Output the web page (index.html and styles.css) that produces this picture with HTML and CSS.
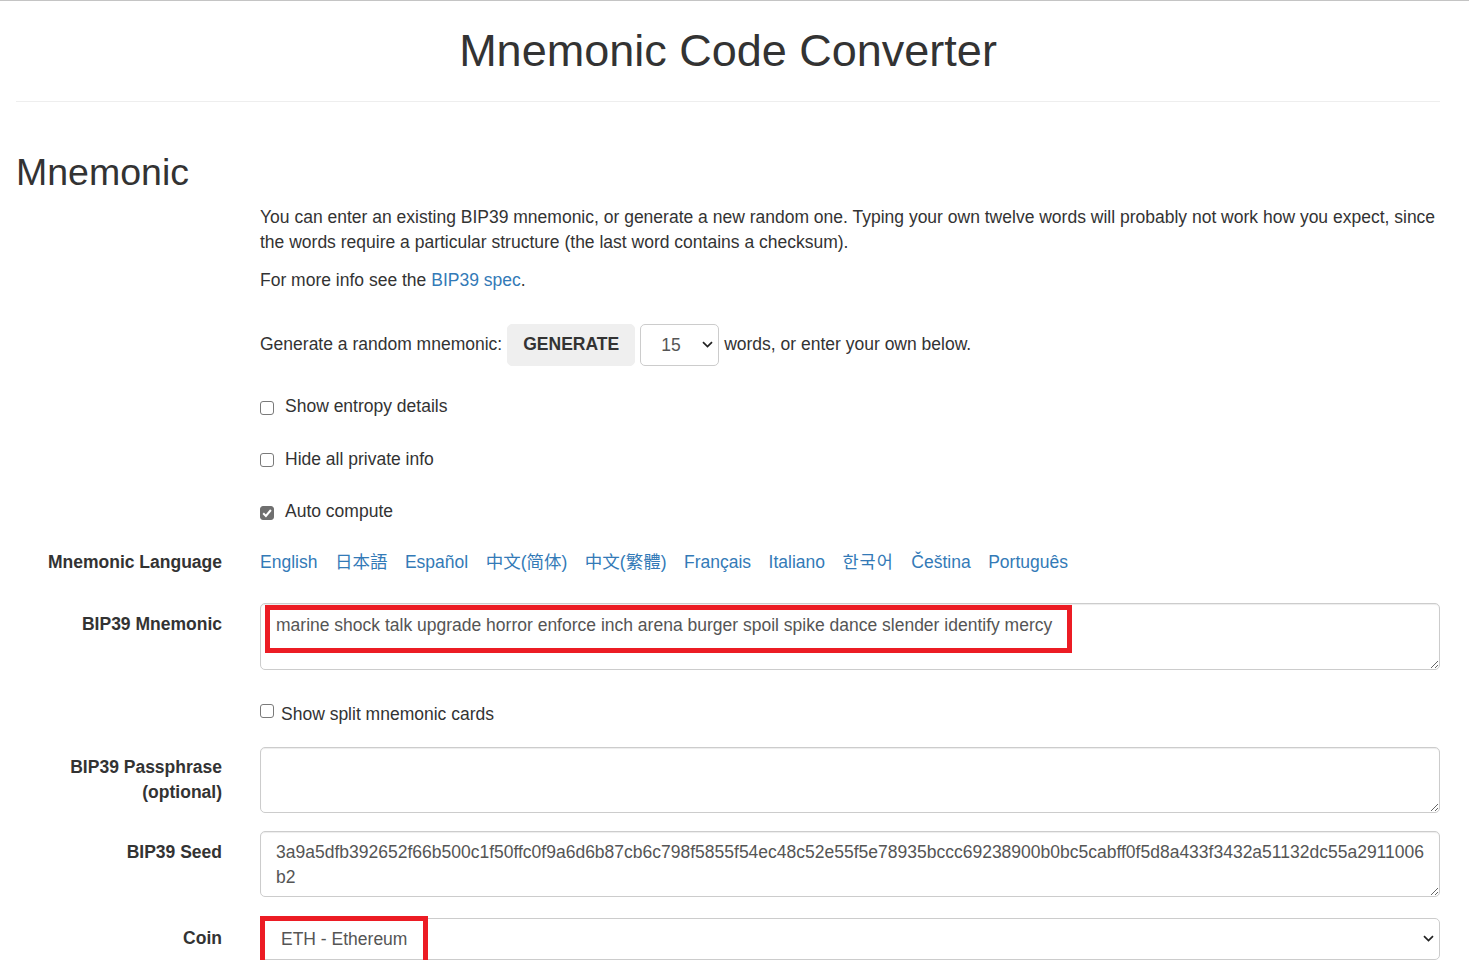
FILE: index.html
```html
<!DOCTYPE html>
<html lang="en">
<head>
<meta charset="utf-8">
<title>Mnemonic Code Converter</title>
<link rel="stylesheet" href="styles.css">
</head>
<body>
<div class="page">
  <header class="page-header">
    <h1>Mnemonic Code Converter</h1>
  </header>

  <h2 class="section-title">Mnemonic</h2>

  <form class="form">
    <div class="group intro">
      <div class="label-col"></div>
      <div class="field-col">
        <p>You can enter an existing BIP39 mnemonic, or generate a new random one. Typing your own twelve words will probably not work how you expect, since the words require a particular structure (the last word contains a checksum).</p>
        <p>For more info see the <a href="#bip39">BIP39 spec</a>.</p>
      </div>
    </div>

    <div class="group generate-row">
      <div class="label-col"></div>
      <div class="field-col inline">
        <span>Generate a random mnemonic:</span>
        <button type="button" class="btn">GENERATE</button>
        <span class="select-wrap words">
          <select class="select">
            <option>3</option><option>6</option><option>9</option><option>12</option>
            <option selected>15</option><option>18</option><option>21</option><option>24</option>
          </select>
          <svg class="chev" width="11" height="7" viewBox="0 0 11 7"><path d="M1 1.2 L5.5 5.6 L10 1.2" fill="none" stroke="#222" stroke-width="1.7"/></svg>
        </span>
        <span>words, or enter your own below.</span>
      </div>
    </div>

    <div class="group check-group">
      <div class="label-col blank"></div>
      <div class="field-col check">
        <label><input type="checkbox" class="sr"><span class="box"></span><span>Show entropy details</span></label>
      </div>
    </div>

    <div class="group check-group">
      <div class="label-col blank"></div>
      <div class="field-col check">
        <label><input type="checkbox" class="sr"><span class="box"></span><span>Hide all private info</span></label>
      </div>
    </div>

    <div class="group check-group">
      <div class="label-col blank"></div>
      <div class="field-col check">
        <label><input type="checkbox" class="sr" checked><span class="box checked"><svg width="14" height="14" viewBox="0 0 14 14"><path d="M3.2 7.3 L5.9 10 L10.9 4" fill="none" stroke="#fff" stroke-width="2"/></svg></span><span>Auto compute</span></label>
      </div>
    </div>

    <div class="group lang-group">
      <div class="label-col">Mnemonic Language</div>
      <div class="field-col langs">
        <a href="#english">English</a>
        <a href="#japanese">日本語</a>
        <a href="#spanish">Español</a>
        <a href="#chinese_simplified">中文(简体)</a>
        <a href="#chinese_traditional">中文(繁體)</a>
        <a href="#french">Français</a>
        <a href="#italian">Italiano</a>
        <a href="#korean" class="ko">한국어</a>
        <a href="#czech">Čeština</a>
        <a href="#portuguese">Português</a>
      </div>
    </div>

    <div class="group">
      <div class="label-col">BIP39 Mnemonic</div>
      <div class="field-col field">
        <textarea class="textarea mnemonic" rows="2">marine shock talk upgrade horror enforce inch arena burger spoil spike dance slender identify mercy</textarea>
        <div class="mark mark-mnemonic"></div>
      </div>
    </div>

    <div class="group split-row">
      <div class="label-col blank"></div>
      <div class="field-col split">
        <label><input type="checkbox" class="sr"><span class="box"></span><span>Show split mnemonic cards</span></label>
      </div>
    </div>

    <div class="group">
      <div class="label-col">BIP39 Passphrase (optional)</div>
      <div class="field-col field">
        <textarea class="textarea" rows="2"></textarea>
      </div>
    </div>

    <div class="group seed-row">
      <div class="label-col">BIP39 Seed</div>
      <div class="field-col field">
        <textarea class="textarea seed" rows="2" readonly>3a9a5dfb392652f66b500c1f50ffc0f9a6d6b87cb6c798f5855f54ec48c52e55f5e78935bccc69238900b0bc5cabff0f5d8a433f3432a51132dc55a2911006
b2</textarea>
      </div>
    </div>

    <div class="group coin-row">
      <div class="label-col">Coin</div>
      <div class="field-col field">
        <span class="select-wrap coin">
          <select class="select">
            <option>BTC - Bitcoin</option>
            <option selected>ETH - Ethereum</option>
          </select>
          <svg class="chev" width="11" height="7" viewBox="0 0 11 7"><path d="M1 1.2 L5.5 5.6 L10 1.2" fill="none" stroke="#222" stroke-width="1.7"/></svg>
        </span>
        <div class="mark mark-coin"></div>
      </div>
    </div>
  </form>
</div>
</body>
</html>
```

FILE: styles.css
```css
* {
  box-sizing: border-box;
}

html {
  background: #fff;
}

body {
  margin: 0;
  border-top: 1px solid #c4c4c4;
  font-family: "Liberation Sans", Arial, "Noto Sans CJK SC", sans-serif;
  font-size: 17.5px;
  line-height: 25px;
  color: #333;
  background: #fff;
}

.page {
  padding: 0 29px 0 16px;
}

.page-header {
  padding: 25px 0 25.5px;
  border-bottom: 1px solid #eee;
}

.page-header h1 {
  margin: 0;
  font-size: 45px;
  line-height: 49.5px;
  font-weight: normal;
  text-align: center;
  color: #333;
}

.section-title {
  margin: 50.4px 0 11.85px;
  font-size: 37.5px;
  line-height: 41.25px;
  font-weight: normal;
  color: #333;
}

.form {
  margin: 0;
}

.group {
  display: grid;
  grid-template-columns: 206px 1fr;
  column-gap: 38px;
  margin-bottom: 18.75px;
}

.label-col {
  text-align: right;
  font-weight: bold;
  padding-top: 8.75px;
}

.label-col.blank {
  padding: 0;
}

.field-col {
  min-width: 0;
}

.intro {
  margin-bottom: 18.5px;
}

.intro p {
  margin: 0 0 12.5px;
}

a {
  color: #337ab7;
  text-decoration: none;
}

.inline {
  display: flex;
  align-items: center;
  gap: 5px;
}

.btn {
  height: 42px;
  padding: 7.5px 15px;
  border: 1px solid #efefef;
  border-radius: 5px;
  background: #efefef;
  font-family: "Liberation Sans", Arial, sans-serif;
  font-size: 17.5px;
  line-height: 25px;
  font-weight: bold;
  color: #333;
}

.select-wrap {
  position: relative;
  display: inline-block;
}

.select-wrap.words {
  width: 79px;
}

.select-wrap.coin {
  display: block;
  width: 100%;
}

.select {
  appearance: none;
  -webkit-appearance: none;
  display: block;
  width: 100%;
  height: 42px;
  padding: 0 30px 0 20px;
  border: 1px solid #ccc;
  border-radius: 5px;
  background: #fff;
  font-family: "Liberation Sans", Arial, sans-serif;
  font-size: 17.5px;
  color: #555;
}

.chev {
  position: absolute;
  right: 6px;
  top: 50%;
  margin-top: -3.5px;
  pointer-events: none;
}

.sr {
  position: absolute;
  width: 1px;
  height: 1px;
  margin: 0;
  opacity: 0;
  pointer-events: none;
}

.check-group {
  margin-bottom: 17.75px;
}

.check {
  padding-top: 9.75px;
}

.check label,
.split label {
  position: relative;
  display: flex;
  align-items: flex-start;
}

.box {
  flex: none;
  display: block;
  width: 14px;
  height: 14px;
  border: 1px solid #7a7a7a;
  border-radius: 3px;
  background: #fff;
}

.box.checked {
  border-color: #6f6f6f;
  background: #6f6f6f;
}

.box.checked svg {
  display: block;
  margin: -1px 0 0 -1px;
}

.check .box {
  margin: 6.5px 11px 0 0;
}

.lang-group .label-col {
  padding-top: 7.75px;
}

.langs {
  display: flex;
  flex-wrap: wrap;
  column-gap: 17.5px;
  padding: 7.75px 0 9.75px;
}

.langs .ko {
  letter-spacing: 1px;
}

.field {
  position: relative;
}

.textarea {
  display: block;
  width: 100%;
  height: 66px;
  padding: 7.5px 15px;
  border: 1px solid #ccc;
  border-radius: 5px;
  box-shadow: inset 0 1px 1px rgba(0, 0, 0, 0.075);
  font-family: "Liberation Sans", Arial, sans-serif;
  font-size: 17.5px;
  line-height: 25px;
  color: #555;
  background: #fff;
  resize: vertical;
  overflow: hidden;
}

.textarea.mnemonic {
  height: 66.5px;
  padding-top: 8.5px;
}

.textarea.seed {
  white-space: pre;
}

.split-row {
  margin-bottom: 19.6px;
}

.split {
  padding-top: 13.4px;
}

.split .box {
  margin: 2px 7px 0 0;
}

.seed-row {
  margin-bottom: 20.25px;
}

.coin-row {
  margin-bottom: 0;
}

.mark {
  position: absolute;
  border: 5px solid #ec1c24;
  pointer-events: none;
}

.mark-mnemonic {
  left: 5px;
  top: 1.5px;
  width: 807px;
  height: 48px;
}

.mark-coin {
  left: 0;
  top: -1.7px;
  width: 168px;
  height: 49px;
}
```
